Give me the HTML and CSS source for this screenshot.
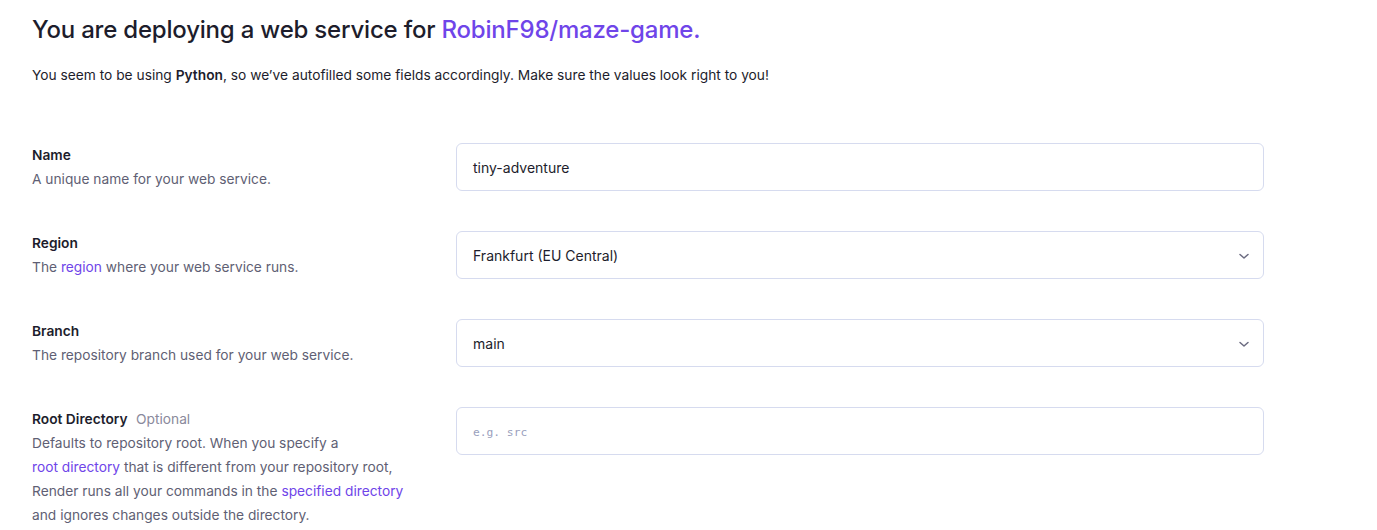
FILE: index.html
```html
<!DOCTYPE html>
<html>
<head>
<meta charset="utf-8">
<link rel="stylesheet" href="styles.css">
</head>
<body>
<main class="page">
  <h1 class="title">You are deploying a web service for <span class="accent">RobinF98/maze-game.</span></h1>
  <p class="intro">You seem to be using <strong>Python</strong>, so we’ve autofilled some fields accordingly. Make sure the values look right to you!</p>

  <div class="form">
    <div class="row">
      <div class="info">
        <div class="label">Name</div>
        <div class="desc">A unique name for your web service.</div>
      </div>
      <div class="field"><span class="value">tiny-adventure</span></div>
    </div>

    <div class="row">
      <div class="info">
        <div class="label">Region</div>
        <div class="desc">The <a class="link">region</a> where your web service runs.</div>
      </div>
      <div class="field select"><span class="value">Frankfurt (EU Central)</span>
        <svg class="chev" width="12" height="12" viewBox="0 0 12 12"><path d="M2 4.5 L6 8 L10 4.5" fill="none" stroke="#6b6b80" stroke-width="1.5" stroke-linecap="round" stroke-linejoin="round"/></svg>
      </div>
    </div>

    <div class="row">
      <div class="info">
        <div class="label">Branch</div>
        <div class="desc">The repository branch used for your web service.</div>
      </div>
      <div class="field select"><span class="value">main</span>
        <svg class="chev" width="12" height="12" viewBox="0 0 12 12"><path d="M2 4.5 L6 8 L10 4.5" fill="none" stroke="#6b6b80" stroke-width="1.5" stroke-linecap="round" stroke-linejoin="round"/></svg>
      </div>
    </div>

    <div class="row">
      <div class="info">
        <div class="label">Root Directory <span class="optional">Optional</span></div>
        <div class="desc">Defaults to repository root. When you specify a<br><a class="link">root directory</a> that is different from your repository root,<br>Render runs all your commands in the <a class="link">specified directory</a><br>and ignores changes outside the directory.</div>
      </div>
      <div class="field"><span class="placeholder">e.g. src</span></div>
    </div>
  </div>
</main>
</body>
</html>
```

FILE: styles.css
```css
html, body {
  margin: 0;
  padding: 0;
  background: #ffffff;
}
body {
  font-family: Inter, "Noto Sans", sans-serif;
  color: #1d1d2c;
}
.page {
  padding: 14px 32px 0 32px;
}
.title {
  margin: 0;
  font-size: 24px;
  line-height: 32px;
  font-weight: 500;
  letter-spacing: -0.2px;
  color: #1d1d2c;
}
.accent {
  color: #6f45e9;
}
.intro {
  margin: 19px 0 0 0;
  font-size: 13.75px;
  line-height: 20px;
  color: #1d1d2c;
}
.intro strong {
  font-weight: 600;
}
.form {
  margin-top: 58px;
  display: flex;
  flex-direction: column;
  gap: 40px;
}
.row {
  display: flex;
  align-items: flex-start;
}
.info {
  width: 424px;
  flex: none;
}
.label {
  font-size: 13.75px;
  line-height: 24px;
  font-weight: 600;
  color: #1d1d2c;
}
.optional {
  font-weight: 400;
  color: #8a8a9c;
  margin-left: 5px;
}
.desc {
  font-size: 13.75px;
  line-height: 24px;
  color: #5f5f74;
}
.link {
  color: #6f45e9;
}
.field {
  width: 808px;
  height: 48px;
  box-sizing: border-box;
  border: 1px solid #d6dbef;
  border-radius: 6px;
  display: flex;
  align-items: center;
  justify-content: space-between;
  padding: 1px 13px 0 16px;
}
.value {
  font-size: 14px;
  color: #1d1d2c;
}
.placeholder {
  font-family: "DejaVu Sans Mono", "Liberation Mono", monospace;
  font-size: 11.25px;
  color: #9aa0bd;
  padding-top: 2px;
}
.chev {
  display: block;
}
```
